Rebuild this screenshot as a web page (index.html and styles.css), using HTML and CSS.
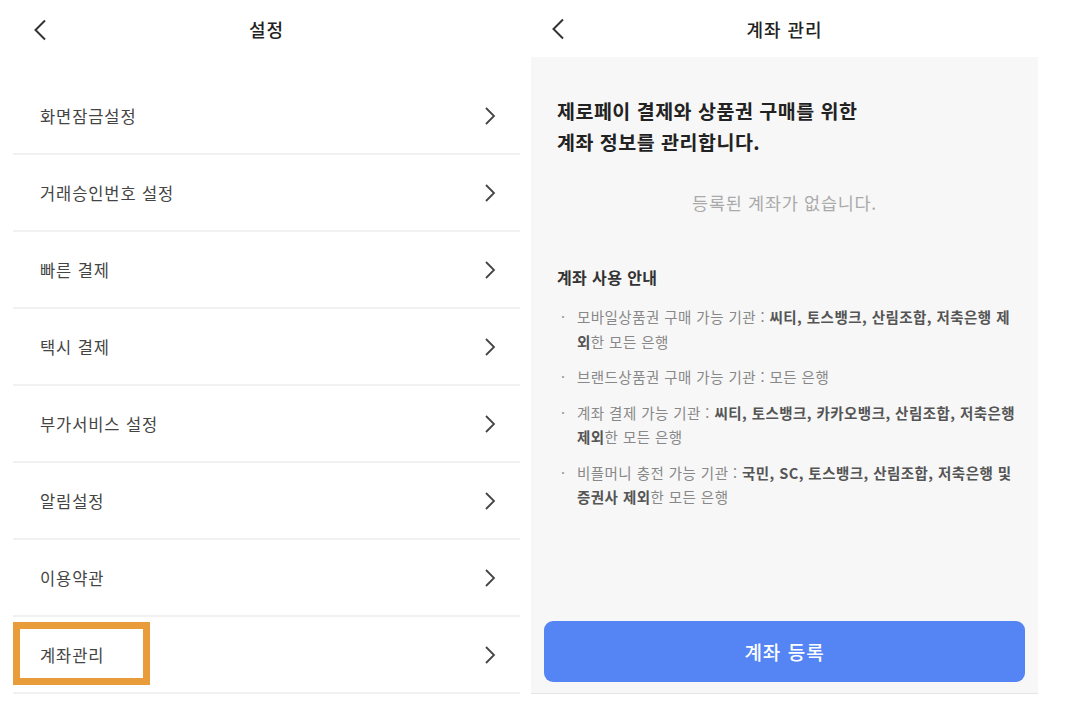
FILE: index.html
```html
<!DOCTYPE html>
<html lang="ko">
<head>
<meta charset="utf-8">
<title>설정 / 계좌 관리</title>
<link rel="stylesheet" href="styles.css">
</head>
<body>
<div class="page">
  <section class="panel left">
    <header class="header">
      <span class="back"><svg width="14" height="22" viewBox="0 0 14 22"><path d="M12 1.5 L2.5 11 L12 20.5" fill="none" stroke="#333" stroke-width="2"/></svg></span>
      <h1 class="title">설정</h1>
      <span></span>
    </header>
    <ul class="menu">
      <li class="row"><span>화면잠금설정</span><svg class="chev" width="12" height="20" viewBox="0 0 12 20"><path d="M2 2 L10 10 L2 18" fill="none" stroke="#444" stroke-width="1.8"/></svg></li>
      <li class="row"><span>거래승인번호 설정</span><svg class="chev" width="12" height="20" viewBox="0 0 12 20"><path d="M2 2 L10 10 L2 18" fill="none" stroke="#444" stroke-width="1.8"/></svg></li>
      <li class="row"><span>빠른 결제</span><svg class="chev" width="12" height="20" viewBox="0 0 12 20"><path d="M2 2 L10 10 L2 18" fill="none" stroke="#444" stroke-width="1.8"/></svg></li>
      <li class="row"><span>택시 결제</span><svg class="chev" width="12" height="20" viewBox="0 0 12 20"><path d="M2 2 L10 10 L2 18" fill="none" stroke="#444" stroke-width="1.8"/></svg></li>
      <li class="row"><span>부가서비스 설정</span><svg class="chev" width="12" height="20" viewBox="0 0 12 20"><path d="M2 2 L10 10 L2 18" fill="none" stroke="#444" stroke-width="1.8"/></svg></li>
      <li class="row"><span>알림설정</span><svg class="chev" width="12" height="20" viewBox="0 0 12 20"><path d="M2 2 L10 10 L2 18" fill="none" stroke="#444" stroke-width="1.8"/></svg></li>
      <li class="row"><span>이용약관</span><svg class="chev" width="12" height="20" viewBox="0 0 12 20"><path d="M2 2 L10 10 L2 18" fill="none" stroke="#444" stroke-width="1.8"/></svg></li>
      <li class="row highlighted"><span>계좌관리</span><svg class="chev" width="12" height="20" viewBox="0 0 12 20"><path d="M2 2 L10 10 L2 18" fill="none" stroke="#444" stroke-width="1.8"/></svg><span class="mark"></span></li>
    </ul>
  </section>

  <section class="panel right">
    <header class="header">
      <span class="back"><svg width="14" height="22" viewBox="0 0 14 22"><path d="M12 1.5 L2.5 11 L12 20.5" fill="none" stroke="#333" stroke-width="2"/></svg></span>
      <h1 class="title">계좌 관리</h1>
      <span></span>
    </header>
    <div class="body">
      <h2 class="lead">제로페이 결제와 상품권 구매를 위한<br>계좌 정보를 관리합니다.</h2>
      <p class="empty">등록된 계좌가 없습니다.</p>
      <h3 class="guide-title">계좌 사용 안내</h3>
      <ul class="guide">
        <li>모바일상품권 구매 가능 기관 : <b>씨티, 토스뱅크, 산림조합, 저축은행 제외</b>한 모든 은행</li>
        <li>브랜드상품권 구매 가능 기관 : 모든 은행</li>
        <li>계좌 결제 가능 기관 : <b>씨티, 토스뱅크, 카카오뱅크, 산림조합, 저축은행 제외</b>한 모든 은행</li>
        <li>비플머니 충전 가능 기관 : <b>국민, SC, 토스뱅크, 산림조합, 저축은행 및 증권사 제외</b>한 모든 은행</li>
      </ul>
      <div class="spacer"></div>
      <button class="register">계좌 등록</button>
    </div>
  </section>
</div>
</body>
</html>
```

FILE: styles.css
```css
* { box-sizing: border-box; }
html, body { margin: 0; padding: 0; background: #fff; }
body {
  font-family: "Noto Sans CJK KR", "Noto Sans", sans-serif;
  color: #333;
  width: 1071px;
  height: 703px;
  overflow: hidden;
}
.page {
  display: flex;
  gap: 11px;
  padding-left: 13px;
}
.panel { width: 507px; display: flex; flex-direction: column; }

.header {
  height: 57px;
  display: grid;
  grid-template-columns: 1fr auto 1fr;
  align-items: center;
}
.back { display: flex; align-items: center; padding-left: 20px; }
.left .back { padding-top: 3px; }
.title {
  margin: 0;
  font-size: 18px;
  font-weight: 500;
  color: #222;
  line-height: 24px;
  letter-spacing: 0.9px;
}
.left .title { padding-top: 1px; }

.menu {
  list-style: none;
  margin: 21px 0 0;
  padding: 0;
}
.row {
  position: relative;
  height: 77px;
  border-bottom: 2px solid #f1f1f1;
  display: flex;
  align-items: center;
  justify-content: space-between;
  padding: 0 24px 0 27px;
  font-size: 16.5px;
  letter-spacing: 0.9px;
  color: #444;
}
.chev { display: block; }
.mark {
  position: absolute;
  left: 0;
  top: 5px;
  width: 137px;
  height: 63px;
  border: 7px solid #e89c3a;
}

.right .body {
  background: #f7f7f7;
  height: 637px;
  border-bottom: 1px solid #e4e4e4;
  display: flex;
  flex-direction: column;
  padding: 38px 13px 11px 13px;
}
.lead {
  margin: 0;
  padding-left: 13px;
  font-size: 19.5px;
  font-weight: 700;
  line-height: 31px;
  letter-spacing: 0.5px;
  color: #222;
}
.empty {
  margin: 34px 0 0;
  text-align: center;
  font-size: 17.5px;
  line-height: 24px;
  letter-spacing: 0.7px;
  color: #aaa;
}
.guide-title {
  margin: 51px 0 0;
  padding-left: 13px;
  font-size: 16px;
  font-weight: 700;
  line-height: 22px;
  letter-spacing: 0.4px;
  color: #333;
}
.guide {
  list-style: none;
  margin: 17px 0 0;
  padding: 0 9px 0 33px;
}
.guide li {
  position: relative;
  font-size: 14.5px;
  line-height: 24.5px;
  letter-spacing: 0.45px;
  color: #888;
  margin-bottom: 11px;
}
.guide li::before {
  content: "·";
  position: absolute;
  left: -16px;
  top: 0;
  color: #999;
}
.guide b { font-weight: 700; color: #555; }
.spacer { flex: 1; }
.register {
  height: 61px;
  width: 100%;
  border: none;
  border-radius: 9px;
  background: #5585f5;
  color: #fff;
  font-family: inherit;
  font-size: 19px;
  font-weight: 500;
  letter-spacing: 1px;
}
```
